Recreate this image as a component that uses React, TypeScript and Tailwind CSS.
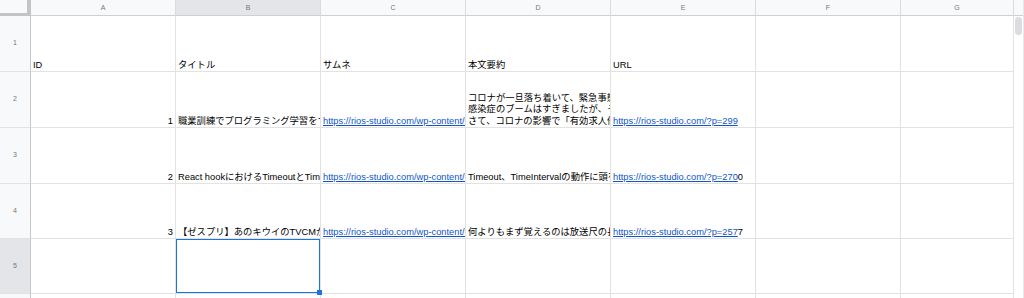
import React from "react";

const cols = ["A", "B", "C", "D", "E", "F", "G"];

const thumb = "https://rios-studio.com/wp-content/uploads/2021/05/thumbnail.png";

type Row = {
  h: string;
  cells: React.ReactNode[];
};

function Link({ text, tail }: { text: string; tail?: string }) {
  return (
    <span>
      <span className="text-[#1155cc] underline underline-offset-[1px]">{text}</span>
      {tail}
    </span>
  );
}

const rows: Row[] = [
  {
    h: "h-[56px]",
    cells: ["ID", "タイトル", "サムネ", "本文要約", "URL", "", ""],
  },
  {
    h: "h-[56px]",
    cells: [
      <div className="text-right">1</div>,
      "職業訓練でプログラミング学習をするメリット",
      <Link text={thumb} />,
      <div>
        <div>コロナが一旦落ち着いて、緊急事態宣言も解除されました</div>
        <div>感染症のブームはすぎましたが、その影響はまだ続いています</div>
        <div>さて、コロナの影響で「有効求人倍率」が下がりました</div>
      </div>,
      <Link text="https://rios-studio.com/?p=299" />,
      "",
      "",
    ],
  },
  {
    h: "h-[56px]",
    cells: [
      <div className="text-right">2</div>,
      "React hookにおけるTimeoutとTimeIntervalの使い方",
      <Link text={thumb} />,
      "Timeout、TimeIntervalの動作に頭を悩ませていませんか",
      <Link text="https://rios-studio.com/?p=270" tail="0" />,
      "",
      "",
    ],
  },
  {
    h: "h-[55px]",
    cells: [
      <div className="text-right">3</div>,
      "【ゼスプリ】あのキウイのTVCMが面白い",
      <Link text={thumb} />,
      "何よりもまず覚えるのは放送尺の長さです",
      <Link text="https://rios-studio.com/?p=257" tail="7" />,
      "",
      "",
    ],
  },
  { h: "h-[55px]", cells: ["", "", "", "", "", "", ""] },
  { h: "h-[40px]", cells: ["", "", "", "", "", "", ""] },
];

export default function App() {
  return (
    <div className="flex h-[298px] w-[1024px] overflow-hidden bg-white font-['Liberation_Sans','Noto_Sans_CJK_JP',sans-serif] text-black">
      <div className="grid grid-cols-[31px_repeat(6,145px)_113px] content-start">
        {/* header row */}
        <div className="h-[16px] border-r-[4px] border-b-[3px] border-[#c4c4c4] bg-[#f8f9fa]" />
        {cols.map((c) => (
          <div
            key={c}
            className={
              "flex h-[16px] items-center justify-center border-r border-b border-r-[#dadce0] border-b-[#d0d0d0] pt-[1px] text-[7px] text-[#777] " +
              (c === "B" ? "bg-[#e3e5e8]" : "bg-[#f8f9fa]")
            }
          >
            {c}
          </div>
        ))}

        {rows.map((r, ri) => (
          <React.Fragment key={ri}>
            <div
              className={
                r.h +
                " flex items-center justify-center border-r border-b border-r-[#c7c7c7] border-b-[#e2e2e2] text-[7px] text-[#777] " +
                (ri === 4 ? "bg-[#e3e5e8]" : "bg-[#f8f9fa]")
              }
            >
              {ri + 1}
            </div>
            {r.cells.map((cell, ci) => (
              <div
                key={ci}
                className={
                  r.h +
                  " relative flex flex-col justify-end overflow-hidden whitespace-nowrap border-r border-b border-[#e2e2e2] px-[2px] pb-0 text-[9.3px] leading-[11.5px]"
                }
              >
                {cell}
                {ri === 4 && ci === 1 && (
                  <div className="absolute -top-[1px] -left-[1px] h-[56px] w-[146px] border-2 border-[#1a73e8]" />
                )}
              </div>
            ))}
          </React.Fragment>
        ))}
      </div>
      {/* selection handle */}
      <div className="relative w-0">
        <div className="absolute left-[-697px] top-[290px] h-[5px] w-[5px] bg-[#1a73e8]" />
      </div>
      {/* scrollbar */}
      <div className="flex w-[10px] flex-col border-r border-[#e8e8e8]">
        <div className="h-[16px] border-b border-[#d0d0d0] bg-[#f8f9fa]" />
        <div className="mx-auto mt-[1px] h-[18px] w-[7px] rounded-full bg-[#dadce0]" />
      </div>
    </div>
  );
}
